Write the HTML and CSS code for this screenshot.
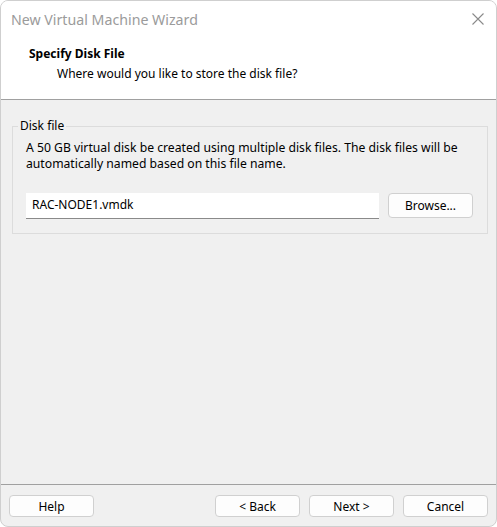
FILE: index.html
```html
<!DOCTYPE html>
<html>
<head>
<meta charset="utf-8">
<link rel="stylesheet" href="styles.css">
</head>
<body>
<div class="window">
  <div class="titlebar">
    <span class="title">New Virtual Machine Wizard</span>
    <svg class="close" width="12" height="12" viewBox="0 0 12 12"><path d="M0.5 0.5 L11.5 11.5 M11.5 0.5 L0.5 11.5" stroke="#8a8a8a" stroke-width="1.1" fill="none"/></svg>
  </div>
  <div class="header">
    <div class="h-title">Specify Disk File</div>
    <div class="h-sub">Where would you like to store the disk file?</div>
  </div>
  <div class="content">
    <fieldset class="group">
      <legend>Disk file</legend>
      <p class="desc">A 50 GB virtual disk be created using multiple disk files. The disk files will be automatically named based on this file name.</p>
      <div class="file-row">
        <div class="textbox">RAC-NODE1.vmdk</div>
        <button class="btn browse">Browse...</button>
      </div>
    </fieldset>
  </div>
  <div class="footer">
    <button class="btn">Help</button>
    <div class="spacer"></div>
    <button class="btn">&lt; Back</button>
    <button class="btn">Next &gt;</button>
    <button class="btn">Cancel</button>
  </div>
</div>
</body>
</html>
```

FILE: styles.css
```css
* { box-sizing: border-box; }
html, body { margin: 0; padding: 0; background: #ffffff; }
body { width: 497px; height: 527px; overflow: hidden; font-family: "Noto Sans", "Open Sans", sans-serif; font-size: 12px; color: #000; }

.window {
  width: 497px;
  height: 527px;
  display: flex;
  flex-direction: column;
  background: #f0f0f0;
  border: 1px solid #cfcfcf;
  border-radius: 8px;
  overflow: hidden;
}

.titlebar {
  height: 37px;
  background: #fff;
  display: flex;
  align-items: center;
  justify-content: space-between;
  padding: 0 12px 0 10px;
}
.title { font-size: 14.2px; color: #9b9b9b; margin-top: -1px; }
.close { margin-top: -1px; }

.header {
  height: 62px;
  background: #fff;
  border-bottom: 1px solid #a0a0a0;
  padding: 8px 0 0 28px;
}
.h-title { font-weight: bold; line-height: 16px; }
.h-sub { padding-left: 28px; line-height: 16px; margin-top: 4px; }

.content {
  flex: 1;
  padding: 18px 8px 0 11px;
}

.group {
  margin: 0;
  border: 1px solid #dcdcdc;
  padding: 6px 14px 14px 13px;
}
.group legend { padding: 0 2px; margin-left: -8px; line-height: 16px; }
.desc { margin: 0; line-height: 16px; font-size: 12.2px; }

.file-row {
  display: flex;
  gap: 9px;
  margin-top: 21px;
  align-items: flex-start;
}
.textbox {
  width: 353px;
  height: 26px;
  background: #fff;
  border-bottom: 1px solid #8a8a8a;
  padding: 3px 0 0 6px;
}

.btn {
  font-family: inherit;
  font-size: 12px;
  color: #000;
  width: 85px;
  height: 22px;
  background: #fdfdfd;
  border: 1px solid #d0d0d0;
  border-radius: 4px;
  padding: 0;
}
.browse { height: 25px; }

.footer {
  height: 42px;
  border-top: 1px solid #a0a0a0;
  display: flex;
  align-items: flex-start;
  gap: 9px;
  padding: 10px 8px 0 8px;
}
.spacer { flex: 1; }
```
